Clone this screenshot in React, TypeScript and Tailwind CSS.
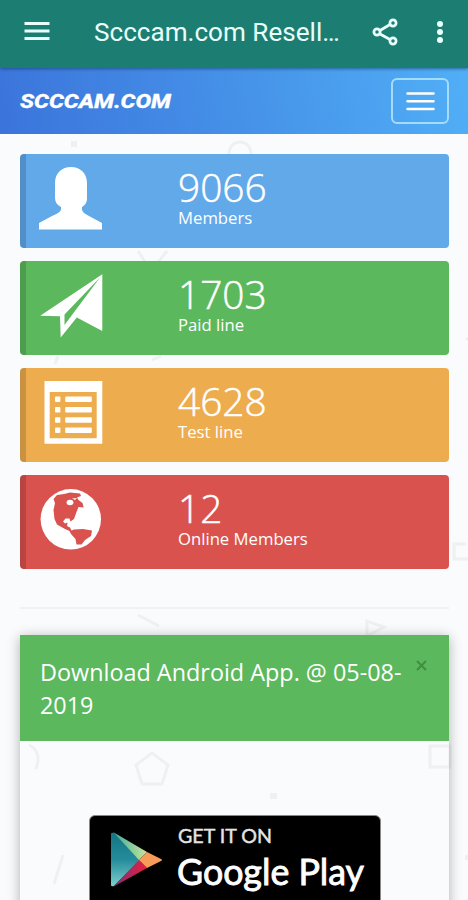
import React from 'react';

const MembersIcon = () => (
  <svg className="h-full w-full" viewBox="0 0 66 66" fill="white">
    <path d="M17 17C17 7 24 1 33 1s16 6 16 16v15c0 5-2 7-5 9v3c1 3 4 4 7 6l13 7v6.5H1V57l13-7c4-2 7-3 9-6v-3c-4-2-6-5-6-9z" />
  </svg>
);

const PlaneIcon = () => (
  <svg className="h-full w-full" viewBox="0 0 66 66" fill="white">
    <path fillRule="evenodd" d="M64.3 1.3V58L38.8 44.5 22.7 64.5 22 43.2 2.2 42.8zM62 4.5 26.5 41.5v10.500z" />
  </svg>
);

const ListIcon = () => (
  <svg className="h-full w-full" viewBox="0 0 66 66" fill="white">
    <path fillRule="evenodd" d="M6.5 1h57.8v62.7H6.5zM11.7 12v46.3h47V12z" />
    {[16.6, 27, 37.3, 47.6].map((y) => (
      <g key={y}>
        <rect x="17" y={y} width="5.4" height="5.4" rx="1" />
        <rect x="27.2" y={y} width="26.6" height="5.4" rx="1" />
      </g>
    ))}
  </svg>
);

const GlobeIcon = () => (
  <svg className="h-full w-full" viewBox="0 0 66 66" fill="white">
    <circle cx="32.8" cy="32.3" r="30.2" />
    <path
      fill="#d9524e"
      d="M15.5 12 19 8 26 7 32 5.500 42 6.500 43 9 39 10.500 40.500 13 44.500 16 45.700 20.500 40.500 20 38.500 25 36 32 32.500 34.500 31.500 31.500 27.500 31.500 25 34.500 27 36.500 29.500 35.500 29 39 32 40.500 33.500 43.500 36 42.500 45 42 54 43.500 53 49 47 53 43.500 57.500 38.500 57.500 37.500 52 33 47 31.500 44 27 42 19 37.500 16.500 32 15.500 23 17 16z"
    />
    <ellipse cx="32" cy="15.500" rx="3.400" ry="2.800" />
    <path d="M34 11.500 39 11 37 13z" />
  </svg>
);

const stats = [
  { value: '9066', label: 'Members', color: 'bg-[#61a9e9]', Icon: MembersIcon },
  { value: '1703', label: 'Paid line', color: 'bg-[#5cb85c]', Icon: PlaneIcon },
  { value: '4628', label: 'Test line', color: 'bg-[#edac4e]', Icon: ListIcon },
  { value: '12', label: 'Online Members', color: 'bg-[#d9524e]', Icon: GlobeIcon },
];

const Pattern = () => (
  <svg className="absolute inset-0 h-[900px] w-[468px]" viewBox="0 0 468 900" fill="none" stroke="#eff0f2" strokeWidth="3">
    <circle cx="240" cy="153" r="11" />
    <path d="M138 251l13 20 16-20M58 356l-3 8M152 360l9-4M138 615l21 11M367 621v15l17-9zM466 544h-12v15h14M466 338l2 2" />
    <path d="M29 745c9 4 11 13 7 24M152 753l16 12-6 19h-20l-6-19zM63 855l-9 29M430 746h20v21h-20z" />
    <path fill="#eff0f2" stroke="none" d="M71 141h6v6h-6zM270 793h7v6h-7zM465 855h3v5h-3z" />
  </svg>
);

const AppBar = () => (
  <header className="relative z-10 flex h-[68px] items-center bg-[#1c7e73] text-[#e8fffb] shadow-[0_1px_3px_rgba(0,40,70,0.5)]">
    <svg className="ml-6 mt-[-6px] h-[18px] w-[26px]" viewBox="0 0 26 18" stroke="currentColor" strokeWidth="2.8">
      <path d="M.5 1.500h25M.5 9h25M.5 16.500h25" />
    </svg>
    <h1 className="-mt-1 ml-11 w-[256px] whitespace-nowrap font-['Roboto',sans-serif] text-[26.100px] leading-8">Scccam.com Resell…</h1>
    <svg className="ml-[22px] mt-[-5px] h-7 w-7" viewBox="0 0 28 28" fill="none" stroke="currentColor" strokeWidth="2.700">
      <path d="M8 12.500 18 6.500M8 16l10 5.500" />
      <circle cx="5" cy="14" r="3.100" />
      <circle cx="21" cy="5" r="3.100" />
      <circle cx="21" cy="23" r="3.100" />
    </svg>
    <svg className="ml-9 mt-[-4px] h-6 w-2" viewBox="0 0 8 24" fill="currentColor">
      <circle cx="4" cy="4" r="3" />
      <circle cx="4" cy="12" r="3" />
      <circle cx="4" cy="20" r="3" />
    </svg>
  </header>
);

const NavBar = () => (
  <nav className="flex h-[66px] items-center justify-between bg-[linear-gradient(75deg,#3b74db,#4591e8_50%,#51aff6)] px-[19px]">
    <svg className="h-6 w-[156px]" viewBox="0 0 156 24" role="img" aria-label="SCCCAM.COM">
      <text
        x="1"
        y="18.5"
        textLength="151"
        lengthAdjust="spacingAndGlyphs"
        fill="white"
        stroke="white"
        strokeWidth="0.300"
        className="font-['Roboto',sans-serif] text-[20px] font-extrabold italic"
      >
        SCCCAM.COM
      </text>
    </svg>
    <button className="flex h-[46px] w-[58px] items-center justify-center rounded-md border-2 border-[#a4dcff]" aria-label="Menu">
      <svg className="h-[19px] w-[29px]" viewBox="0 0 29 19" stroke="white" strokeWidth="2.500" strokeLinecap="round">
        <path d="M1.500 1.500h26M1.500 9.200h26M1.500 17h26" />
      </svg>
    </button>
  </nav>
);

const PlayBadge = () => (
  <div className="mx-auto mt-[74px] flex h-[90px] w-[292px] rounded-t-md border border-[#888] bg-black text-white">
    <svg className="ml-5 mt-4 h-[56px] w-[54px]" viewBox="0 0 54 56">
      <defs>
        <linearGradient id="play" x1="0" y1="0" x2="0" y2="1">
          <stop stopColor="#147583" />
          <stop offset="0.500" stopColor="#258b9b" />
          <stop offset="1" stopColor="#7bd1ca" />
        </linearGradient>
        <linearGradient id="playTop">
          <stop stopColor="#39ad9d" />
          <stop offset="1" stopColor="#c9e49b" />
        </linearGradient>
        <linearGradient id="playBottom">
          <stop stopColor="#803078" />
          <stop offset="1" stopColor="#e51f3d" />
        </linearGradient>
      </defs>
      <path fill="url(#play)" d="M1 2q0-2 3-1l26 27L4 54q-3 1-3-1z" />
      <path fill="url(#playTop)" d="M3 0 37 20l-8 8z" />
      <path fill="url(#playBottom)" d="M3 55 37 36l-8-8z" />
      <path fill="#f79b58" d="M37 20 51 27q2 1 0 2L37 36l-8-8z" />
    </svg>
    <svg className="ml-3 mt-[9px] h-20 w-[194px]" viewBox="0 0 194 80" fill="white">
      <text x="2" y="17.5" textLength="94" lengthAdjust="spacingAndGlyphs" fill="#e5e5e5" stroke="#e5e5e5" strokeWidth="0.400" className="font-['Lato',sans-serif] text-[18.500px] font-normal">
        GET IT ON
      </text>
      <text x="1" y="60" textLength="187" lengthAdjust="spacingAndGlyphs" stroke="white" strokeWidth="0.900" className="font-['Lato',sans-serif] text-[37px] font-normal">
        Google Play
      </text>
    </svg>
  </div>
);

export default function App() {
  return (
    <div className="relative isolate h-[900px] w-[468px] overflow-hidden bg-[#fafbfd] font-['Open_Sans',sans-serif]">
      <AppBar />
      <NavBar />
      <div className="absolute inset-0 -z-10">
        <Pattern />
      </div>

      <main className="px-5 pt-5">
        <div className="flex flex-col gap-[13.4px]">
          {stats.map(({ value, label, color, Icon }) => (
            <section key={label} className={`flex h-[93.6px] w-[429px] rounded-[4px] border-l-[6px] border-black/15 text-white ${color}`}>
              <div className="ml-3 mt-3 h-[66px] w-[66px]">
                <Icon />
              </div>
              <div className="ml-[74px] pt-3">
                <div className="text-[38.800px] font-light leading-[43px] [-webkit-text-stroke:0.5px_white]">{value}</div>
                <div className="text-[16.700px] leading-[18px]">{label}</div>
              </div>
            </section>
          ))}
        </div>

        <hr className="mt-[38px] w-[429px] border-t-2 border-[#f0f1f3]" />

        <section className="mt-[26px] h-[320px] w-[429px] shadow-[0_2px_12px_rgba(0,0,0,0.3)]">
          <div className="flex h-[106px] justify-between bg-[#5cb85c] px-5 pt-[21px] text-white">
            <h2 className="w-[370px] text-[23.400px] leading-[33px]">Download Android App. @ 05-08-2019</h2>
            <svg className="mr-[2px] mt-1 h-[11px] w-[11px]" viewBox="0 0 11 11" stroke="#408f40" strokeWidth="2">
              <path d="M1 1l9 9M10 1l-9 9" />
            </svg>
          </div>
          <PlayBadge />
        </section>
      </main>
    </div>
  );
}
